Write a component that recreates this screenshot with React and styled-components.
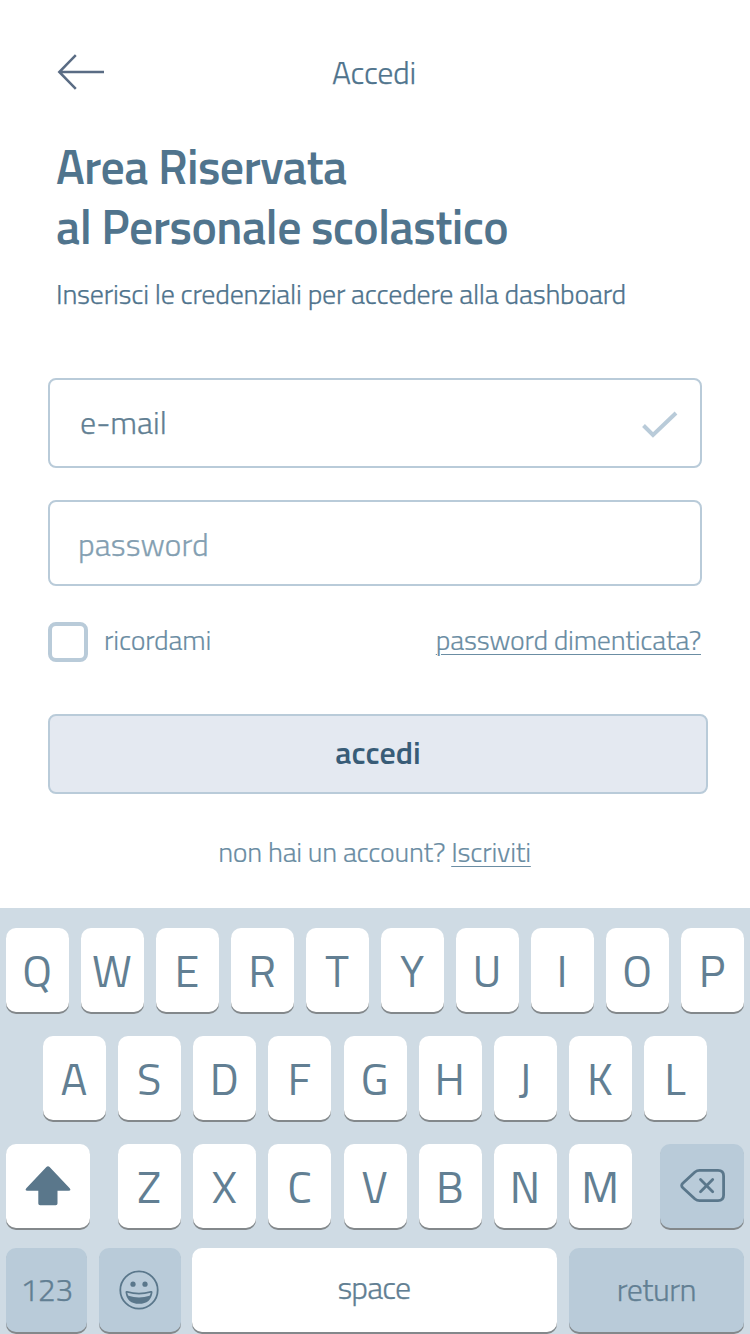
import React from "react";
import styled, { createGlobalStyle } from "styled-components";

const GlobalStyle = createGlobalStyle`
  * { box-sizing: border-box; }
  body {
    margin: 0;
    background: #ffffff;
    font-family: "Titillium Web", Roboto, "Liberation Sans", sans-serif;
  }
  button, input { font-family: inherit; }
`;

const Screen = styled.div`
  width: 750px;
  height: 1334px;
  overflow: hidden;
  display: flex;
  flex-direction: column;
  background: #ffffff;
`;

const Header = styled.header`
  height: 138px;
  padding: 6px 57px 0;
  display: grid;
  grid-template-columns: 120px 1fr 120px;
  align-items: center;
`;

const BackButton = styled.button`
  width: 48px;
  height: 38px;
  padding: 0;
  border: 0;
  background: none;
  svg { display: block; }
`;

const HeaderTitle = styled.div`
  padding-right: 2px;
  text-align: center;
  font-size: 32px;
  font-weight: 300;
  line-height: 40px;
  letter-spacing: ${(p) => p.$spacing}px;
  -webkit-text-stroke: 0.25px currentColor;
  color: #50748d;
`;

const Intro = styled.section`
  padding-left: 56px;
  white-space: nowrap;
  color: #50748d;
`;

const Title = styled.h1`
  margin: -1px 0 0;
  font-size: 48px;
  font-weight: 600;
  line-height: 60px;
`;

const TitleLine = styled.span`
  display: block;
  letter-spacing: ${(p) => p.$spacing}px;
`;

const Subtitle = styled.p`
  margin: 17px 0 0;
  font-size: 28px;
  font-weight: 300;
  line-height: 40px;
  letter-spacing: ${(p) => p.$spacing}px;
  -webkit-text-stroke: 0.25px currentColor;
`;

const Form = styled.form`
  margin: 64px 0 0 48px;
  width: 660px;
  display: flex;
  flex-direction: column;
`;

const Field = styled.div`
  width: 654px;
  height: ${(p) => p.$height}px;
  margin-bottom: ${(p) => p.$after}px;
  padding: ${(p) => p.$pad};
  display: flex;
  align-items: center;
  justify-content: space-between;
  border: 2px solid #b9cbd9;
  border-radius: 8px;
  font-size: 32px;
  font-weight: 300;
  line-height: 40px;
  letter-spacing: ${(p) => p.$spacing}px;
  -webkit-text-stroke: 0.25px currentColor;
  color: ${(p) => p.$color};
  svg { margin-top: 6px; }
`;

const Options = styled.div`
  width: 654px;
  height: 40px;
  margin-bottom: 52px;
  padding-right: 1px;
  display: flex;
  align-items: center;
  font-size: 28px;
  font-weight: 300;
  -webkit-text-stroke: 0.15px currentColor;
  color: #6b8da3;
`;

const Checkbox = styled.span`
  width: 40px;
  height: 40px;
  border: 4px solid #b9cbd9;
  border-radius: 8px;
`;

const RememberLabel = styled.span`
  margin: -4px auto 0 16px;
  line-height: 40px;
  letter-spacing: ${(p) => p.$spacing}px;
`;

const Link = styled.a`
  white-space: nowrap;
  line-height: 40px;
  margin-top: ${(p) => p.$lift || 0}px;
  letter-spacing: ${(p) => p.$spacing}px;
  text-decoration: underline;
  text-decoration-thickness: 1px;
  text-underline-offset: 4px;
`;

const Submit = styled.button`
  width: 660px;
  height: 80px;
  padding: 0 0 5px;
  border: 2px solid #b9cbd9;
  border-radius: 8px;
  background: #e4e9f1;
  color: #385c77;
  font-size: 32px;
  font-weight: 600;
  line-height: 40px;
  letter-spacing: ${(p) => p.$spacing}px;
`;

const SignUp = styled.p`
  margin: 38px 0 0;
  padding-right: 1px;
  text-align: center;
  font-size: 28px;
  font-weight: 300;
  line-height: 40px;
  letter-spacing: ${(p) => p.$spacing}px;
  -webkit-text-stroke: 0.15px currentColor;
  color: #6b8da3;
`;

const Keyboard = styled.section`
  margin-top: auto;
  height: 426px;
  padding: 20px 6px 0;
  background: #cfdbe4;
`;

const KeyRow = styled.div`
  height: ${(p) => p.$height || 108}px;
  display: flex;
  justify-content: space-between;
  align-items: flex-start;
  padding: 0 ${(p) => p.$inset || 0}px;
`;

const KeyGroup = styled.div`
  display: flex;
  width: 514.2px;
  margin-left: 0.2px;
  justify-content: space-between;
`;

const Key = styled.div`
  width: 63px;
  height: 84px;
  padding-right: 1px;
  display: flex;
  align-items: center;
  justify-content: center;
  border-radius: 10px;
  background: ${(p) => (p.$muted ? "#b9cbd9" : "#ffffff")};
  box-shadow: 0 2px 0 #83888b;
  color: #627f93;
  font-size: 45px;
  font-weight: 400;
  line-height: 60px;
  svg { display: block; }
`;

const WideKey = styled(Key)`
  width: ${(p) => p.$width}px;
  padding: 0 ${(p) => p.$back || 0}px ${(p) => p.$lift || 0}px ${(p) => p.$nudge || 0}px;
  font-size: 32px;
  font-weight: 300;
  letter-spacing: ${(p) => p.$spacing || 0}px;
  -webkit-text-stroke: 0.25px currentColor;
`;

const ArrowLeft = () => (
  <svg width="48" height="38" viewBox="0 0 48 38" fill="none" stroke="#5a6c84" strokeWidth="2.5">
    <path d="M47 19H2.3M18.8 2.2L2.3 19L18.8 35.8" />
  </svg>
);

const Check = () => (
  <svg width="36" height="28" viewBox="0 0 36 28" fill="none" stroke="#b9cbd9" strokeWidth="4">
    <path d="M1.5 14.5L11 24L34 2" />
  </svg>
);

const Shift = () => (
  <svg width="46" height="40" viewBox="0 0 46 40" fill="#5a778b">
    <path d="M21.4 1Q23 -.4 24.6 1L44.7 22.2Q46.6 24.8 43.5 24.8H32.5V37.4Q32.5 39.2 30.7 39.2H15.1Q13.3 39.2 13.3 37.4V24.8H2.5Q-.6 24.8 1.3 22.2Z" />
  </svg>
);

const Backspace = () => (
  <svg width="46" height="36" viewBox="0 0 46 36" fill="none" stroke="#5a778b" strokeWidth="2.8" strokeLinecap="round" strokeLinejoin="round">
    <path d="M19.5 2.4H38Q43.6 2.4 43.6 8V27Q43.6 32.6 38 32.6H19.5Q17 32.6 15 31L2.8 19.7Q.5 17.5 2.8 15.3L15 4Q17 2.4 19.5 2.4Z" />
    <path d="M20.5 11.5L32.7 23.7M32.7 11.5L20.5 23.7" />
  </svg>
);

const Smile = () => (
  <svg width="40" height="40" viewBox="0 0 40 40">
    <circle cx="20" cy="20" r="18.7" fill="none" stroke="#5a778b" strokeWidth="1.8" />
    <circle cx="14" cy="14.2" r="2.6" fill="#5a778b" />
    <circle cx="26" cy="14.2" r="2.6" fill="#5a778b" />
    <path d="M6.5 22.2Q6.5 20.6 8.2 21.1Q20 24.4 31.7 21.1Q33.5 20.6 33.5 22.2Q32 33.8 20 33.8Q8 33.8 6.5 22.2Z" fill="#5a778b" />
    <path d="M8.3 22.8Q20 26 31.7 22.8Q31.5 24.5 30.6 25.8Q20 29.2 9.4 25.8Q8.5 24.5 8.3 22.8Z" fill="#b9cbd9" />
  </svg>
);

const letters = (chars) => chars.split("").map((c) => <Key key={c}>{c}</Key>);

export default function App() {
  return (
    <Screen>
      <GlobalStyle />
      <Header>
        <BackButton type="button" aria-label="Indietro"><ArrowLeft /></BackButton>
        <HeaderTitle $spacing={-0.3}>Accedi</HeaderTitle>
      </Header>
      <Intro>
        <Title>
          <TitleLine $spacing={-0.64}>Area Riservata</TitleLine>
          <TitleLine $spacing={-0.6}>al Personale scolastico</TitleLine>
        </Title>
        <Subtitle $spacing={-0.23}>Inserisci le credenziali per accedere alla dashboard</Subtitle>
      </Intro>
      <Form>
        <Field $height={90} $after={32} $pad="0 22px 2px 30px" $spacing={0} $color="#627f93">
          <span>e-mail</span>
          <Check />
        </Field>
        <Field $height={86} $after={36} $pad="2px 28px 0" $spacing={0.05} $color="#849fb2">
          <span>password</span>
        </Field>
        <Options>
          <Checkbox role="checkbox" aria-checked="false" />
          <RememberLabel $spacing={-0.2}>ricordami</RememberLabel>
          <Link $lift={-4} $spacing={-0.25}>password dimenticata?</Link>
        </Options>
        <Submit type="button" $spacing={0}>accedi</Submit>
      </Form>
      <SignUp $spacing={-0.25}>
        non hai un account? <Link $spacing={-0.25}>Iscriviti</Link>
      </SignUp>
      <Keyboard>
        <KeyRow>{letters("QWERTYUIOP")}</KeyRow>
        <KeyRow $inset={37}>{letters("ASDFGHJKL")}</KeyRow>
        <KeyRow $height={104}>
          <WideKey $width={84}><Shift /></WideKey>
          <KeyGroup>{letters("ZXCVBNM")}</KeyGroup>
          <WideKey $width={84} $nudge={1} $muted><Backspace /></WideKey>
        </KeyRow>
        <KeyRow>
          <WideKey $width={81} $lift={2} $spacing={-0.5} $muted>123</WideKey>
          <WideKey $width={82} $lift={1} $back={1} $muted><Smile /></WideKey>
          <WideKey $width={365} $lift={6} $back={2} $spacing={-0.9}>space</WideKey>
          <WideKey $width={175} $spacing={-0.5} $lift={2} $muted>return</WideKey>
        </KeyRow>
      </Keyboard>
    </Screen>
  );
}
